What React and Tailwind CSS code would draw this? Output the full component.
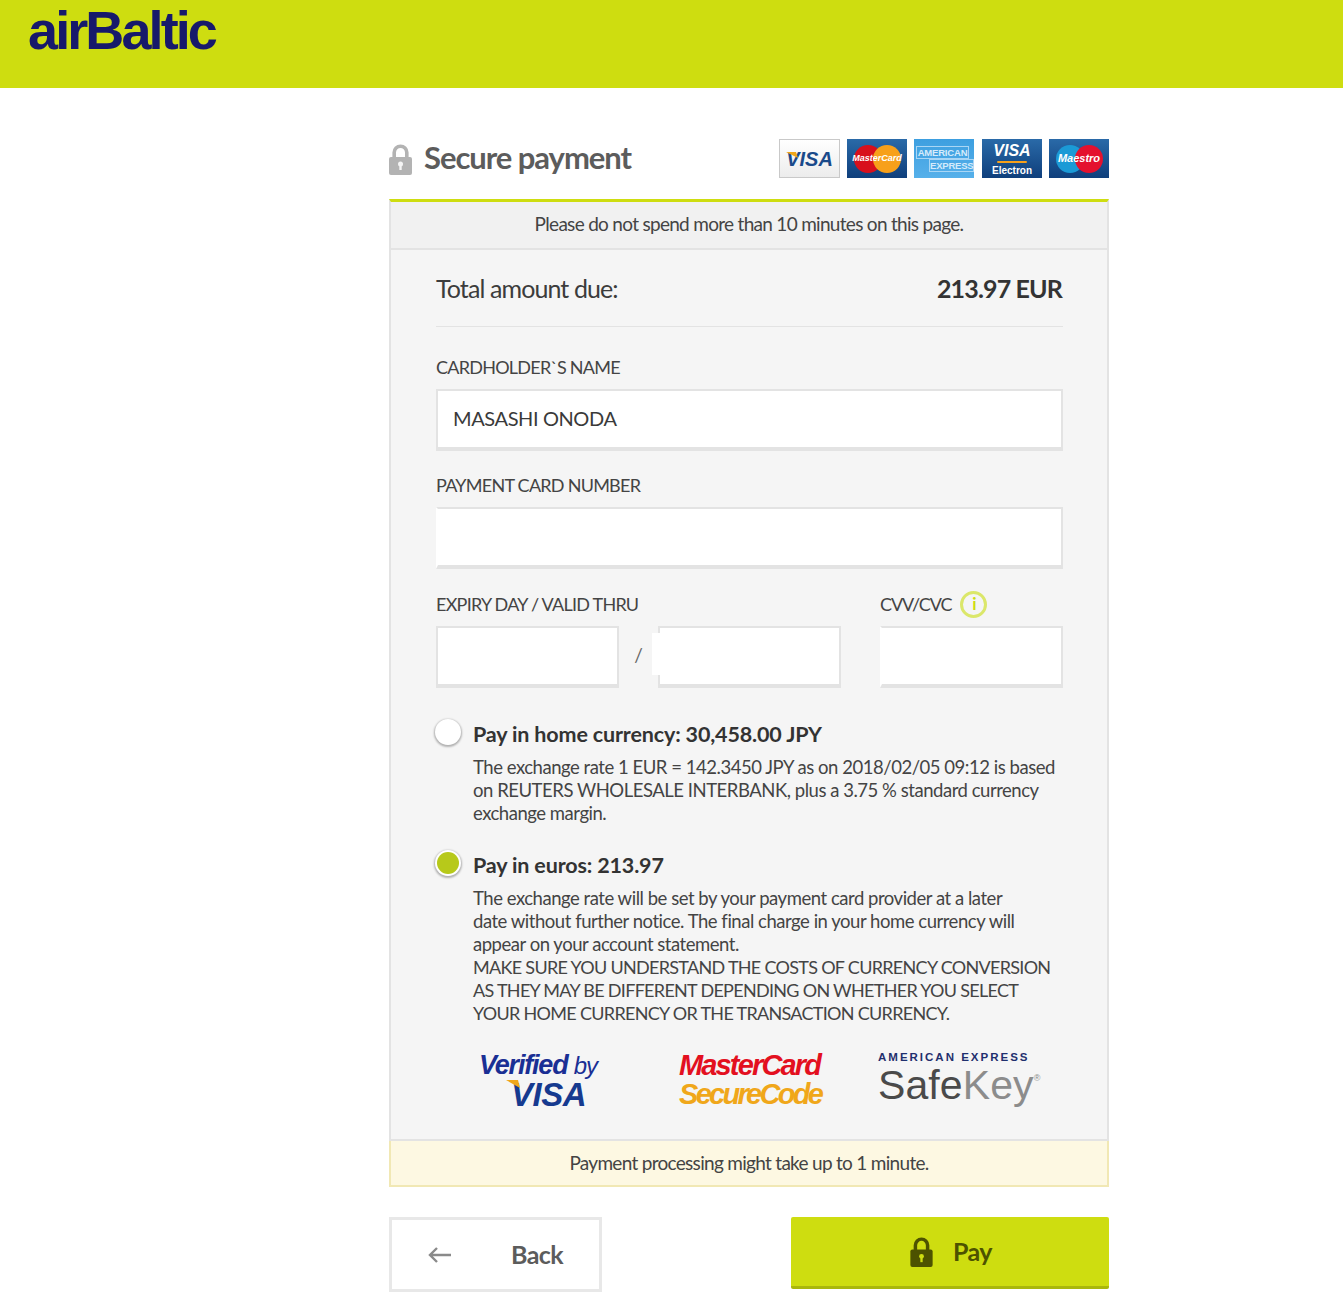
function Lock({ className, keyhole }) {
  return (
    <svg viewBox="0 0 23 31" className={className}>
      <path
        d="M5.2 14V8.5a6.3 6.3 0 0 1 12.6 0V14"
        fill="none"
        stroke="currentColor"
        strokeWidth="3.6"
      />
      <rect x="0" y="13" width="23" height="18" rx="2" fill="currentColor" />
      <circle cx="11.5" cy="20" r="2.5" fill={keyhole} />
      <rect x="10.3" y="20" width="2.4" height="6" fill={keyhole} />
    </svg>
  );
}

function VisaCard() {
  return (
    <div className="relative flex h-[39px] w-[61px] items-center justify-center border border-[#c9c9c9] bg-gradient-to-b from-white to-[#ececec] text-[20px] leading-none font-bold text-[#1a4a8a] italic font-['Liberation_Sans',sans-serif]">
      VISA
      <svg viewBox="0 0 12 6" className="absolute top-[12px] left-[6px] h-[6px] w-[12px]">
        <polygon points="0,0 10,0 12,6" fill="#f0a71a" />
      </svg>
    </div>
  );
}

function MasterCard() {
  return (
    <div className="relative h-[39px] w-[60px] bg-gradient-to-b from-[#2a6aa8] to-[#0f3f7c]">
      <div className="absolute top-[6px] left-[7px] h-[28px] w-[28px] rounded-full bg-[#d8101c]" />
      <div className="absolute top-[6px] left-[26px] h-[28px] w-[28px] rounded-full bg-[#f7a01a]" />
      <div className="absolute inset-0 flex items-center justify-center text-[9px] font-bold text-white italic font-['Liberation_Sans',sans-serif]">
        MasterCard
      </div>
    </div>
  );
}

function AmexCard() {
  return (
    <div className="mr-[1px] flex h-[39px] w-[60px] flex-col justify-center overflow-hidden bg-gradient-to-b from-[#3d9fe0] to-[#56b0ea] pl-[2px] text-[9.5px] leading-[11px] font-bold text-[#d5ebfb] font-['Liberation_Sans',sans-serif]">
      <span className="w-[53px] border border-[#a9d6f5] text-center tracking-[-0.2px]">AMERICAN</span>
      <span className="ml-[13px] border border-[#a9d6f5] text-center tracking-[-0.2px]">EXPRESS</span>
    </div>
  );
}

function ElectronCard() {
  return (
    <div className="flex h-[39px] w-[60px] flex-col items-center bg-gradient-to-b from-[#2a6aa8] to-[#0f3f7c] pt-[3px] font-bold text-white font-['Liberation_Sans',sans-serif]">
      <span className="text-[16px] leading-[18px] italic">VISA</span>
      <span className="mt-[1px] h-[2px] w-[30px] rounded-full bg-[#f7a01a]" />
      <span className="mt-[2px] text-[10px] leading-[11px]">Electron</span>
    </div>
  );
}

function MaestroCard() {
  return (
    <div className="relative h-[39px] w-[60px] bg-gradient-to-b from-[#2a6aa8] to-[#0f3f7c]">
      <div className="absolute top-[6px] left-[7px] h-[28px] w-[28px] rounded-full bg-[#1b9ad6]" />
      <div className="absolute top-[6px] left-[26px] h-[28px] w-[28px] rounded-full bg-[#e4112e]" />
      <div className="absolute inset-0 flex items-center justify-center text-[11px] font-bold text-white italic font-['Liberation_Sans',sans-serif]">
        Maestro
      </div>
    </div>
  );
}

function Label({ children }) {
  return (
    <div className="mb-[10px] h-[24px] whitespace-nowrap text-[18px] leading-[24px] tracking-[-0.75px] text-[#444]">
      {children}
    </div>
  );
}

function Input({ value, className = "", children }) {
  return (
    <div
      className={`relative flex h-[62px] items-center border-2 border-b-[4px] border-[#e3e3e3] bg-white pb-[2px] pl-[15px] text-[20px] tracking-[-0.4px] text-[#3a3a3a] ${className}`}
    >
      {value}
      {children}
    </div>
  );
}

function Radio({ checked }) {
  return (
    <div className="-ml-[1px] flex h-[26px] w-[26px] shrink-0 items-center justify-center rounded-full bg-white shadow-[0_1px_2px_1px_rgba(0,0,0,0.28)]">
      {checked && <div className="h-[22px] w-[22px] rounded-full bg-[#b7c91a]" />}
    </div>
  );
}

function Option({ checked, title, children }) {
  return (
    <div className="flex gap-[12px]">
      <Radio checked={checked} />
      <div className="min-w-0 flex-1">
        <div className="h-[30px] text-[21.5px] leading-[30px] font-bold tracking-[-0.15px] text-[#333]">
          {title}
        </div>
        <div className="mt-[7px] whitespace-nowrap text-[18.5px] leading-[23px] tracking-[-0.47px] text-[#444]">
          {children}
        </div>
      </div>
    </div>
  );
}

export default function App() {
  return (
    <div className="min-h-[1299px] bg-white font-['Lato','Open_Sans',sans-serif]">
      <header className="h-[88px] bg-[#cedd10] pt-[3px] pl-[28px]">
        <div className="text-[54px] leading-[54px] font-bold tracking-[-2.9px] text-[#17196b] font-['Liberation_Sans',sans-serif]">
          airBaltic
        </div>
      </header>

      <main className="ml-[389px] w-[720px]">
        <div className="flex h-[111px] items-start justify-between pt-[51px]">
          <div className="flex h-[40px] items-center gap-[12px]">
            <Lock className="h-[31px] w-[23px] text-[#b3b3b3]" keyhole="#f5f5f5" />
            <h1 className="mb-[4px] text-[31px] leading-[40px] font-bold tracking-[-1.05px] text-[#5c5c5c]">
              Secure payment
            </h1>
          </div>
          <div className="flex gap-[7px]">
            <VisaCard />
            <MasterCard />
            <AmexCard />
            <ElectronCard />
            <MaestroCard />
          </div>
        </div>

        <section className="border-x-2 border-t-[3px] border-b-2 border-x-[#e3e3e3] border-t-[#cedd10] border-b-[#e3e3e3] bg-[#f5f5f5]">
          <div className="flex h-[48px] items-center justify-center border-b-2 border-[#e3e3e3] bg-[#f1f1f1] pb-[1px] text-[19px] tracking-[-0.7px] text-[#444]">
            Please do not spend more than 10 minutes on this page.
          </div>

          <div className="pr-[44px] pl-[45px]">
            <div className="flex h-[77px] items-center justify-between border-b border-[#e3e3e3] pt-[1px] pr-[1px] text-[25px]">
              <span className="tracking-[-0.9px] text-[#3c3c3c]">Total amount due:</span>
              <span className="font-bold tracking-[-0.85px] text-[#333]">213.97 EUR</span>
            </div>

            <div className="mt-[28px] flex flex-col gap-[22px]">
              <div>
                <Label>CARDHOLDER`S NAME</Label>
                <Input value="MASASHI ONODA" />
              </div>
              <div>
                <Label>PAYMENT CARD NUMBER</Label>
                <Input className="border-l-white" />
              </div>
              <div className="mt-[1px] flex">
                <div className="w-[405px]">
                  <Label>EXPIRY DAY / VALID THRU</Label>
                  <div className="flex items-center">
                    <Input className="w-[183px]" />
                    <span className="mb-[4px] w-[39px] text-center text-[19px] text-[#666]">/</span>
                    <Input className="w-[183px]">
                      <div className="absolute top-[5px] -left-[8px] h-[42px] w-[8px] bg-white" />
                    </Input>
                  </div>
                </div>
                <div className="relative ml-[39px] w-[183px]">
                  <div className="mb-[10px] flex h-[24px] items-center gap-[9px] text-[18px] leading-[24px] tracking-[-1.1px] text-[#444]">
                    CVV/CVC
                    <span className="flex h-[27px] w-[27px] items-center justify-center rounded-full border-[3px] border-[#dbe76a] text-[17px] font-bold text-[#cedd10]">
                      i
                    </span>
                  </div>
                  <Input className="border-l-white" />
                </div>
              </div>
            </div>

            <div className="mt-[31px] flex flex-col gap-[25px]">
              <Option title="Pay in home currency: 30,458.00 JPY">
                The exchange rate 1 EUR = 142.3450 JPY as on 2018/02/05 09:12 is based
                <br />
                on REUTERS WHOLESALE INTERBANK, plus a 3.75 % standard currency
                <br />
                exchange margin.
              </Option>
              <Option checked title="Pay in euros: 213.97">
                The exchange rate will be set by your payment card provider at a later
                <br />
                date without further notice. The final charge in your home currency will
                <br />
                appear on your account statement.
                <br />
                <span className="text-[18px] tracking-[-0.7px]">
                  MAKE SURE YOU UNDERSTAND THE COSTS OF CURRENCY CONVERSION
                  <br />
                  AS THEY MAY BE DIFFERENT DEPENDING ON WHETHER YOU SELECT
                  <br />
                  YOUR HOME CURRENCY OR THE TRANSACTION CURRENCY.
                </span>
              </Option>
            </div>

            <div className="flex h-[114px] items-start pt-[26px] font-['Liberation_Sans',sans-serif]">
              <div className="relative ml-[43px] w-[200px] text-[#1a2f94] italic">
                <div className="text-[27px] leading-[28px] font-bold tracking-[-1.2px]">
                  Verified <span className="text-[24px] font-normal">by</span>
                </div>
                <div className="ml-[32px] text-[33px] leading-[30px] font-bold tracking-[-0.5px] text-[#163a8f]">
                  VISA
                </div>
                <svg viewBox="0 0 14 8" className="absolute top-[29px] left-[27px] h-[8px] w-[14px]">
                  <polygon points="0,0 12,0 14,8" fill="#f0a71a" />
                </svg>
              </div>
              <div className="w-[199px] font-bold italic">
                <div className="text-[29px] leading-[29px] tracking-[-1.85px] text-[#e3101f]">MasterCard</div>
                <div className="text-[29px] leading-[29px] tracking-[-2.7px] text-[#f0a71a]">SecureCode</div>
              </div>
              <div className="mt-[-1px] whitespace-nowrap">
                <div className="text-[11.5px] leading-[14px] font-bold tracking-[2px] text-[#1f2f6e]">
                  AMERICAN EXPRESS
                </div>
                <div className="text-[41px] leading-[42px] tracking-[0.1px] text-[#4a4a4a]">
                  Safe<span className="text-[#8c8c8c]">Key</span>
                  <span className="relative -top-[18px] text-[9px] text-[#8c8c8c]">®</span>
                </div>
              </div>
            </div>
          </div>
        </section>

        <div className="flex h-[46px] items-center justify-center border-x-2 border-b-2 border-[#f1e8b4] bg-[#fdf8e2] text-[19px] tracking-[-0.7px] text-[#444]">
          Payment processing might take up to 1 minute.
        </div>

        <div className="mt-[30px] flex items-start justify-between">
          <button
            type="button"
            className="flex h-[75px] w-[213px] items-center border-[3px] border-[#e8e8e8] bg-white px-[36px] text-[25px] font-bold tracking-[-0.6px] text-[#5c5c5c]"
          >
            <svg viewBox="0 0 24 16" className="h-[16px] w-[24px] text-[#8a8a8a]">
              <path d="M23 8H2M9 1 2 8l7 7" fill="none" stroke="currentColor" strokeWidth="2.4" />
            </svg>
            <span className="ml-auto">Back</span>
          </button>
          <button
            type="button"
            className="flex h-[72px] w-[318px] items-center justify-center gap-[18px] rounded-[2px] border-b-[3px] border-[#a9b70c] bg-[#cedd10] text-[25px] font-bold tracking-[-0.6px] text-[#4d5200]"
          >
            <Lock className="h-[30px] w-[27px] text-[#4d5200]" keyhole="#cedd10" />
            Pay
          </button>
        </div>
      </main>
    </div>
  );
}
